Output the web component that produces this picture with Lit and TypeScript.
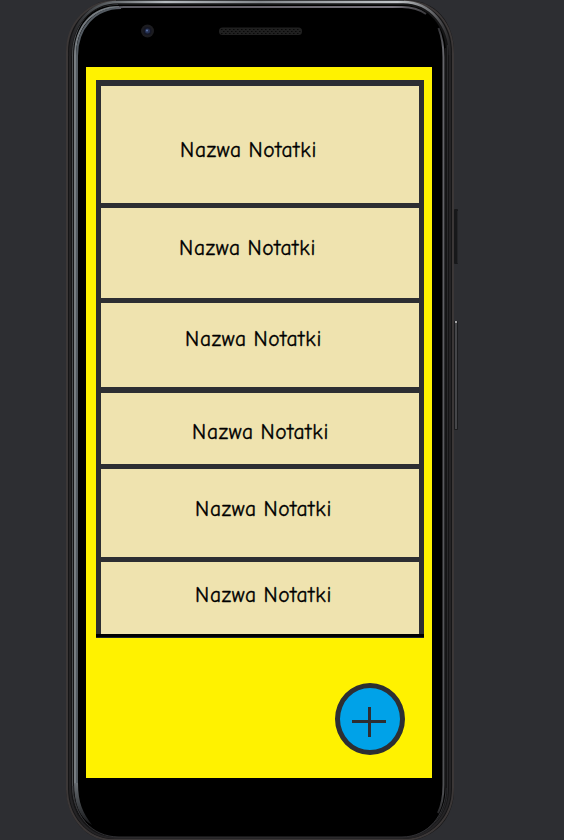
import { LitElement, html, css, svg } from "lit";
import { customElement, property } from "lit/decorators.js";

@customElement("phone-frame")
class PhoneFrame extends LitElement {
  static styles = css`
    :host { display: block; position: absolute; inset: 0; }
    svg { display: block; }
  `;
  render() {
    const holes = Array.from({ length: 20 }, (_, i) => i);
    return html`<svg width="564" height="840" viewBox="0 0 564 840" fill="none">
      <defs>
        <linearGradient id="rim" x1="70" y1="0" x2="451" y2="0" gradientUnits="userSpaceOnUse">
          <stop offset="0" stop-color="#222123" /><stop offset="0.07" stop-color="#4c5053" /><stop offset="0.25" stop-color="#b5babf" />
          <stop offset="0.5" stop-color="#85898e" /><stop offset="0.86" stop-color="#c2c6ca" />
          <stop offset="0.95" stop-color="#66676a" /><stop offset="1" stop-color="#222123" />
        </linearGradient>
        <linearGradient id="topline" x1="80" y1="0" x2="427" y2="0" gradientUnits="userSpaceOnUse">
          <stop offset="0" stop-color="#626970" /><stop offset="0.2" stop-color="#5b575f" />
          <stop offset="0.9" stop-color="#77737c" /><stop offset="1" stop-color="#38383b" />
        </linearGradient>
        <linearGradient id="rightline" x1="0" y1="28" x2="0" y2="815" gradientUnits="userSpaceOnUse">
          <stop offset="0" stop-color="#303034" /><stop offset="0.025" stop-color="#66666b" />
          <stop offset="0.97" stop-color="#505154" /><stop offset="1" stop-color="#242426" />
        </linearGradient>
        <linearGradient id="leftfade" x1="0" y1="775" x2="0" y2="825" gradientUnits="userSpaceOnUse">
          <stop offset="0" stop-color="#777d83" /><stop offset="1" stop-color="#17181a" />
        </linearGradient>
      </defs>
      <rect x="454" y="209" width="4" height="55" rx="1" fill="#17181a" />
      <path d="M457.5 211v52" stroke="#242528" />
      <rect x="454" y="321" width="4" height="109" rx="1" fill="#1b1c1e" />
      <path d="M456 323v106" stroke="#707174" />
      <rect x="455" y="321" width="2" height="2" fill="#a4a4a5" />
      <path d="M66 56C66 23 87 0 116 0H405C436 0 454 22 454 53V789C454 821 432 841 402 841H113C84 841 66 816 66 786Z" fill="#151516" />
      <path d="M67 790V52C67 23 88 1 116 1M404 1C435 1 453 24 453 53V788C453 818 432 840 402 840H113C86 840 67 816 67 788" stroke="#3b3737" stroke-width="2" />
      <path d="M70 54V788C70 815 88 838 115 838H402C430 838 450 816 450 788V53" stroke="#242325" stroke-width="2" />
      <path d="M70 56C70 25 90 2 118 2H403C431 2 450 26 450 55" stroke="url(#rim)" stroke-width="2.5" />
      <path d="M119 836.5C90 836.5 72.5 813 72.5 785V55C72.5 27 90 5 118 5" stroke="#4b4d50" />
      <path d="M447.5 45V790C447.5 814 430 836 403 836H116" stroke="#29292b" />
      <path d="M116 5H402C429 5 446 27 446 53V789C446 815 427 837 401 837H117C90 837 74 814 74 788V53C74 25 90 5 116 5Z" fill="#000" />
      <path d="M75 784V56C75 27 92 7 119 7" stroke="#777d82" stroke-width="2" />
      <path d="M77 784V56C77 29 94 8 121 8" stroke="#535a61" stroke-width="2" />
      <path d="M74 783C74 804 80 819 92 825C83 813 78 803 78 783Z" fill="url(#leftfade)" />
      <path d="M116 8Q119 7 124 7H402C412 7 419 9 426 14" stroke="url(#topline)" stroke-width="2" />
      <path d="M438.5 28C442 37 443.5 45 443.5 57V785C443.5 798 442 805 438 813" stroke="url(#rightline)" stroke-width="2" />
      <path d="M73 786C73 815 91 837 119 837H402C428 837 446 815 446 788" stroke="#303033" />
      <path d="M445.5 48V788" stroke="#171718" />
      <circle cx="147.5" cy="31" r="6.5" fill="#1c1c20" />
      <circle cx="147.5" cy="31" r="4" fill="#141624" />
      <circle cx="147.5" cy="31" r="2.5" fill="#263253" />
      <circle cx="147" cy="30.5" r="1" fill="#5e75ac" />
      <rect x="219" y="27.5" width="83" height="7.5" rx="3.5" fill="#202020" />
      ${holes.map((i) => svg`<path d="M${221 + i * 4} 29.5h1.5m.5 2h1.5m-3.5 2h1.5" stroke="#090909" />`)}
    </svg>`;
  }
}

@customElement("note-row")
class NoteRow extends LitElement {
  @property() name = "";
  static styles = css`
    :host { display: block; background: #efe3af; color: #000; overflow: hidden; }
    .name {
      display: block; white-space: nowrap;
      font: 21.5px/28px "Comic Sans MS", "Comic Neue", cursive;
      letter-spacing: 0.75px; word-spacing: -1.4px;
      -webkit-text-stroke: 0.35px #000;
    }
  `;
  render() { return html`<span class="name">${this.name}</span>`; }
}

@customElement("app-root")
class AppRoot extends LitElement {
  static styles = css`
    :host { display: block; position: relative; width: 564px; height: 840px; overflow: hidden; background: #2d2e32; }
    .page { display: flow-root; }
    .screen {
      position: relative; box-sizing: border-box; width: 346px; height: 711px;
      margin: 67px 0 0 86px; padding: 13px 8px 23px 10px; background: #fff200;
      display: flex; flex-direction: column; justify-content: space-between;
    }
    .list {
      box-sizing: border-box; height: 558px; padding: 6px 5px 0; background: #2d2e32;
      display: grid; grid-template-rows: 117px 90px 84px 71px 88px 72px; row-gap: 5px; align-content: start;
      border-bottom: 1px solid #20252b; box-shadow: inset 0 -3px #000;
    }
    .r0 { padding: 50px 0 0 79px; }
    .r1 { padding: 26px 0 0 78px; }
    .r2 { padding: 22px 0 0 84px; }
    .r3 { padding: 25px 0 0 91px; }
    .r4 { padding: 26px 0 0 94px; }
    .r5 { padding: 19px 0 0 94px; }
    .r3, .r4, .r5 { margin: 1px 0 -1px; }
    .add {
      box-sizing: border-box; align-self: flex-end; width: 70px; height: 72px; margin-right: 19px; padding: 0;
      border: 5px solid #2d2e32; border-radius: 50%; background: #00a2e8;
    }
    .add svg { display: block; }
  `;
  render() {
    return html`<div class="page">
      <phone-frame></phone-frame>
      <main class="screen">
        <div class="list">
          ${[0, 1, 2, 3, 4, 5].map((i) => html`<note-row class="r${i}" name="Nazwa Notatki"></note-row>`)}
        </div>
        <button class="add" aria-label="+">
          <svg width="60" height="62" viewBox="0 0 60 62"><path d="M12 33.5H46M29.5 19V49" stroke="#2d2e32" stroke-width="3" /></svg>
        </button>
      </main>
    </div>`;
  }
}
